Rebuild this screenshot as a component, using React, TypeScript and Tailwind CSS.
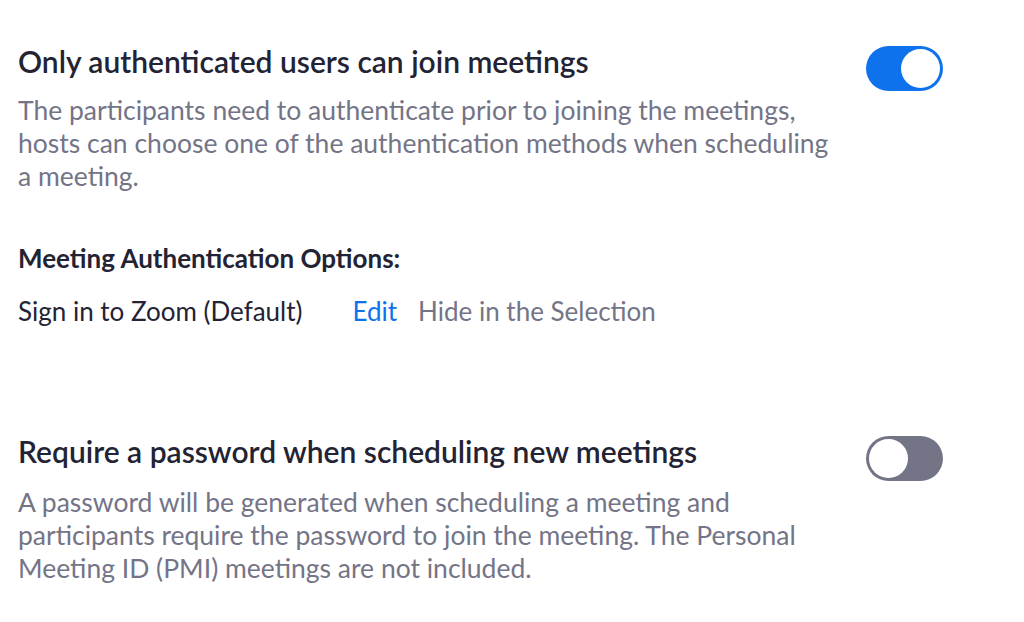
import React from "react";

function Toggle({ on }: { on: boolean }) {
  return (
    <div
      className={`flex h-[45px] w-[77px] shrink-0 items-center rounded-full p-[3px] ${
        on ? "justify-end bg-[#0e72ed]" : "justify-start bg-[#747487]"
      }`}
    >
      <div className="h-[39px] w-[39px] rounded-full bg-white" />
    </div>
  );
}

export default function App() {
  return (
    <div className="h-[622px] w-[1024px] overflow-hidden bg-white font-['Lato','Noto_Sans',sans-serif] text-[#232333]">
      {/* Auth section */}
      <div className="flex justify-between pl-[18px] pr-[81px] pt-[44px]">
        <div>
          <h2 className="text-[30px] font-semibold leading-[34px]">Only authenticated users can join meetings</h2>
          <p className="mt-[16px] w-[826px] text-[26.5px] leading-[33px] text-[#747487]">
            The participants need to authenticate prior to joining the meetings,
            hosts can choose one of the authentication methods when scheduling
            a meeting.
          </p>
          <h3 className="mt-[49px] text-[26px] font-bold leading-[32px]">Meeting Authentication Options:</h3>
          <div className="mt-[21px] flex text-[26px] leading-[32px]">
            <span>Sign in to Zoom (Default)</span>
            <span className="ml-[50px] text-[#0e72ed]">Edit</span>
            <span className="ml-[21px] text-[#747487]">Hide in the Selection</span>
          </div>
        </div>
        <div className="pt-[2px]">
          <Toggle on />
        </div>
      </div>

      {/* Password section */}
      <div className="flex justify-between pl-[18px] pr-[81px] pt-[107px]">
        <div>
          <h2 className="text-[30px] font-semibold leading-[34px]">Require a password when scheduling new meetings</h2>
          <p className="mt-[18px] w-[826px] text-[26.5px] leading-[33px] text-[#747487]">
            A password will be generated when scheduling a meeting and
            participants require the password to join the meeting. The Personal
            Meeting ID (PMI) meetings are not included.
          </p>
        </div>
        <div className="pt-[2px]">
          <Toggle on={false} />
        </div>
      </div>
    </div>
  );
}
